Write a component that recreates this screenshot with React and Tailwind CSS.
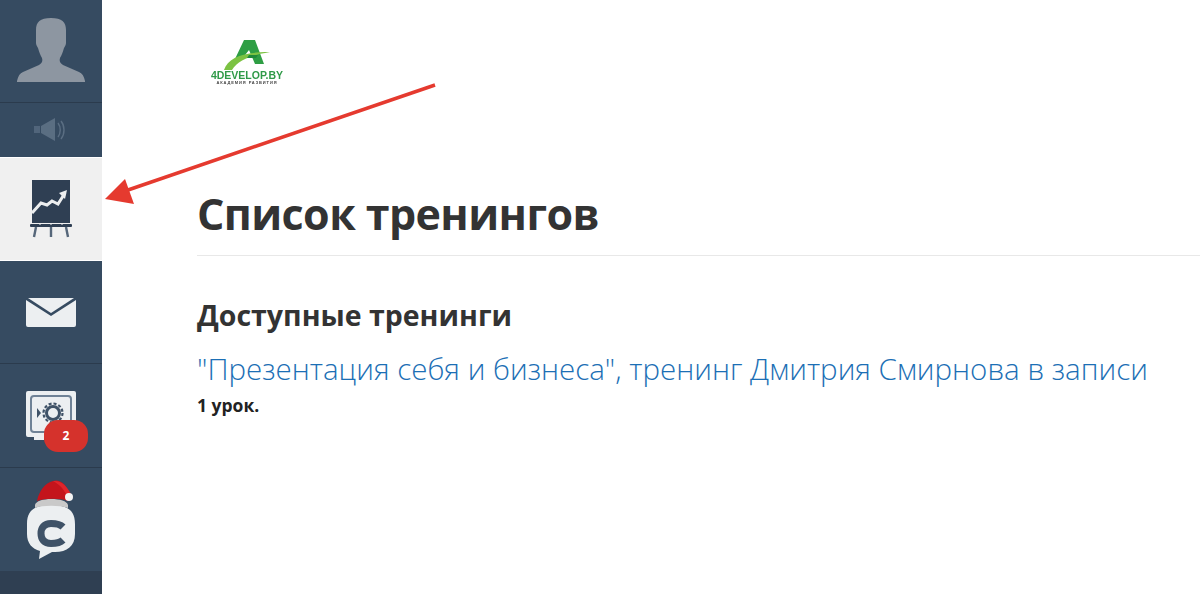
function Avatar() {
  return (
    <svg width="68" height="66" viewBox="0 0 68 66">
      <path
        d="M34 0c-11 0-15 4-15 12v13c0 2 1 3 2 5 1 3 2 7 4 10 1 3 0 5-3 7L6 54c-3 1-5 4-6 9v1h68v-1c-1-5-3-8-6-9l-16-7c-3-2-4-4-3-7 2-3 3-7 4-10 1-2 2-3 2-5V12C49 4 45 0 34 0z"
        fill="#8d96a1"
      />
    </svg>
  );
}

function Speaker() {
  return (
    <svg width="34" height="24" viewBox="0 0 34 24" className="opacity-70">
      <rect x="0" y="8" width="6" height="7" fill="#5d7186" />
      <path d="M7 8 L21 0 V23 L7 15z" fill="#6a7d91" />
      <path d="M24 5c3 4 3 10 0 14M27 3c4 5 4 13 0 18" fill="none" stroke="#6a7d91" strokeWidth="1.4" />
    </svg>
  );
}

function ChartBoard() {
  return (
    <svg width="42" height="60" viewBox="0 0 42 60" className="blur-[0.3px]">
      <rect x="2" y="0" width="38" height="43" fill="#2f3f53" />
      <path d="M2 33 L11 23 L17 25 L22 21 L28 24 L35 13" fill="none" stroke="#eceeef" strokeWidth="3" />
      <path d="M29 13 L37 10 L35 19z" fill="#eceeef" />
      <rect x="0" y="44" width="42" height="3" rx="1" fill="#2f3f53" />
      <path d="M6 47 L4 57 M21 47 V57 M36 47 L38 57" stroke="#56677a" strokeWidth="2.4" />
      <path d="M10 43v2M21 43v2M32 43v2" stroke="#eeeeee" strokeWidth="1" />
    </svg>
  );
}

function Mail() {
  return (
    <svg width="50" height="30" viewBox="0 0 50 30">
      <path d="M2 0 H48 L25 15z" fill="#eceff1" />
      <path d="M0 2 L25 18 L50 2 V27 a2 2 0 0 1-2 2 H2 a2 2 0 0 1-2-2z" fill="#eceff1" />
    </svg>
  );
}

function Safe() {
  return (
    <svg width="50" height="50" viewBox="0 0 50 50" className="blur-[0.3px]">
      <path d="M2 0 H48 a2 2 0 0 1 2 2 V44 a2 2 0 0 1-2 2 H18 V49 H8 V46 H2 a2 2 0 0 1-2-2 V2 a2 2 0 0 1 2-2z" fill="#eceff1" />
      <rect x="5" y="5" width="40" height="36" rx="3" fill="none" stroke="#6f8296" strokeWidth="2" />
      <circle cx="27" cy="22" r="6.5" fill="none" stroke="#3f5267" strokeWidth="3" />
      <circle cx="27" cy="22" r="9.5" fill="none" stroke="#3f5267" strokeWidth="2.2" strokeDasharray="3 2" />
      <path d="M11 17 L15 22 L11 27z" fill="#3f5267" />
    </svg>
  );
}

function ChatHat() {
  return (
    <svg width="52" height="82" viewBox="0 0 52 82" className="blur-[0.3px]">
      <path d="M2 46 C2 32 10 27 26 27 C42 27 50 32 50 46 V56 C50 68 42 74 30 74 L27 74 L14 81 L15 73 C7 71 2 65 2 56z" fill="#eceff1" />
      <path d="M38 49 C35 46 31 45.500 26 45.500 C19 45.500 16 50 16 55.500 C16 61 19 65.500 26 65.500 C31 65.500 35 65 38 62" fill="none" stroke="#3f5267" strokeWidth="7" />
      <path d="M10 27 C11 23 18 21 26 21 C35 21 42 23 43 27 L43 30 C34 27 18 27 10 30z" fill="#c9c9c9" />
      <path d="M12 23 C14 13 20 5 28 3 C34 1 40 5 42 11 C43 15 43 19 43 23 C36 20 20 20 12 23z" fill="#c4141c" />
      <path d="M28 3 C36 2 42 8 46 16 L42 18 C39 11 34 6 28 3z" fill="#e0252b" />
      <circle cx="44" cy="19" r="4" fill="#f4f4f4" />
    </svg>
  );
}

function Logo() {
  return (
    <div className="flex w-[72px] flex-col items-center blur-[0.4px]">
      <svg width="50" height="30" viewBox="0 0 50 30">
        <path d="M22 0 H33 L42 24 H33 L27 10 L20 19 H13z" fill="#2e9e44" />
        <path d="M2 30 C6 18 20 12 48 12 C30 15 16 20 10 30z" fill="#7cc242" />
        <path d="M27 15 H36 L34 18 H25z" fill="#1f8a3a" />
      </svg>
      <span className="font-['Liberation_Sans',sans-serif] text-[10.5px] leading-[10px] font-bold whitespace-nowrap text-[#2f9a48]">4DEVELOP.BY</span>
      <span className="font-['Liberation_Sans',sans-serif] text-[4px] leading-[6px] font-bold tracking-[0.9px] whitespace-nowrap text-[#444]">АКАДЕМИЯ РАЗВИТИЯ</span>
    </div>
  );
}

const Divider = () => <div className="h-px bg-[#2b3b4d]" />;

export default function App() {
  return (
    <div className="relative flex h-[594px] w-[1200px] overflow-hidden bg-white font-['Open_Sans',sans-serif]">
      <aside className="flex w-[102px] shrink-0 flex-col bg-[#364b61]">
        <div className="flex h-[102px] items-end justify-center pb-[18px]">
          <Avatar />
        </div>
        <Divider />
        <div className="flex h-[54px] items-center justify-center pr-[1px]">
          <Speaker />
        </div>
        <div className="flex h-[104px] items-center justify-center border-y border-white bg-[#f0f0f0] pt-[2px]">
          <ChartBoard />
        </div>
        <div className="flex h-[102px] items-center justify-center pt-[2px]">
          <Mail />
        </div>
        <Divider />
        <div className="relative flex h-[103px] items-start justify-center pt-[27px]">
          <Safe />
          <span className="absolute top-[56px] left-[44px] flex h-[32px] w-[44px] items-center justify-center rounded-[14px] bg-[#d5322c] text-[12px] font-bold text-white">2</span>
        </div>
        <Divider />
        <div className="flex h-[103px] items-start justify-center pt-[10px]">
          <ChatHat />
        </div>
        <div className="flex-1 bg-[#2f3f52]" />
      </aside>
      <main className="flex-1 pl-[95px]">
        <div className="pt-[40px] pl-[14px]">
          <Logo />
        </div>
        <h1 className="mt-[100px] border-b border-[#e8e8e8] pb-[13px] text-[43px] leading-[56px] font-bold tracking-[-0.6px] whitespace-nowrap text-[#333]">
          Список тренингов
        </h1>
        <h2 className="mt-[41px] text-[28.5px] leading-[36px] font-bold whitespace-nowrap text-[#333]">Доступные тренинги</h2>
        <a className="mt-[18px] block text-[29.5px] leading-[36px] font-light whitespace-nowrap text-[#1c6fb5]">
          "Презентация себя и бизнеса", тренинг Дмитрия Смирнова в записи
        </a>
        <p className="mt-[8px] text-[17.5px] leading-[20px] font-bold text-[#222]">1 урок.</p>
      </main>
      {/* red arrow annotation */}
      <svg className="absolute top-0 left-0" width="1200" height="594" viewBox="0 0 1200 594" fill="none">
        <path d="M435 85 L128 190" stroke="#e53a2f" strokeWidth="3.5" />
        <path d="M105 199 L125 179 L134 204z" fill="#e53a2f" />
      </svg>
    </div>
  );
}
